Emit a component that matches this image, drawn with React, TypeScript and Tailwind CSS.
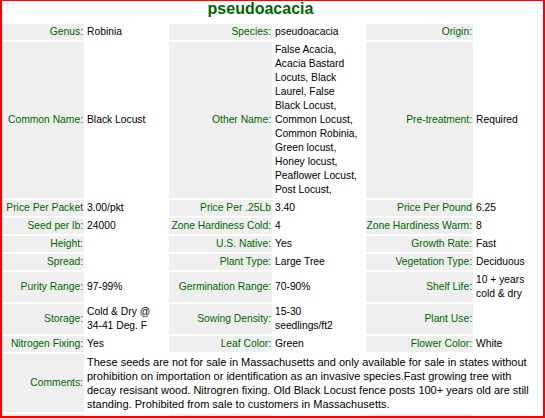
import type { ReactNode } from "react";

const lines = (...parts: string[]) => (
  <>
    {parts.map((p, i) => (
      <div key={i} className="whitespace-nowrap">
        {p}
      </div>
    ))}
  </>
);

const rows: [string, ReactNode, string, ReactNode, string, ReactNode][] = [
  ["Genus:", "Robinia", "Species:", "pseudoacacia", "Origin:", ""],
  [
    "Common Name:",
    "Black Locust",
    "Other Name:",
    lines(
      "False Acacia,",
      "Acacia Bastard",
      "Locuts, Black",
      "Laurel, False",
      "Black Locust,",
      "Common Locust,",
      "Common Robinia,",
      "Green locust,",
      "Honey locust,",
      "Peaflower Locust,",
      "Post Locust,"
    ),
    "Pre-treatment:",
    "Required",
  ],
  ["Price Per Packet", "3.00/pkt", "Price Per .25Lb", "3.40", "Price Per Pound", "6.25"],
  ["Seed per lb:", "24000", "Zone Hardiness Cold:", "4", "Zone Hardiness Warm:", "8"],
  ["Height:", "", "U.S. Native:", "Yes", "Growth Rate:", "Fast"],
  ["Spread:", "", "Plant Type:", "Large Tree", "Vegetation Type:", "Deciduous"],
  ["Purity Range:", "97-99%", "Germination Range:", "70-90%", "Shelf Life:", lines("10 + years", "cold & dry")],
  [
    "Storage:",
    lines("Cold & Dry @", "34-41 Deg. F"),
    "Sowing Density:",
    lines("15-30", "seedlings/ft2"),
    "Plant Use:",
    "",
  ],
  ["Nitrogen Fixing:", "Yes", "Leaf Color:", "Green", "Flower Color:", "White"],
];

const Label = ({ text }: { text: string }) => (
  <div className="bg-[#efefef] text-[#006600] p-px flex items-center justify-end text-right whitespace-nowrap">
    {text}
  </div>
);

const Value = ({ text }: { text: ReactNode }) => (
  <div className="p-px flex items-center text-black">
    <div>{text}</div>
  </div>
);

const App = () => {
  return (
    <div
      className="w-[545px] h-[418px] bg-white overflow-hidden border-t border-l-2 border-r-2 border-b-2 border-[#ff0000] text-[10.3px] leading-[14px]"
      style={{ fontFamily: '"Liberation Sans", Arial, sans-serif' }}
    >
      <div className="h-[21px] text-center pr-[24px] text-[16px] leading-[16px] font-bold text-[#006600]">
        pseudoacacia
      </div>
      <div className="mt-[2px] grid grid-cols-[82px_81px_103px_90px_107px_66px] gap-[2px]">
        {rows.map((r, i) => (
          <div className="contents" key={i}>
            <Label text={r[0]} />
            <Value text={r[1]} />
            <Label text={r[2]} />
            <Value text={r[3]} />
            <Label text={r[4]} />
            <Value text={r[5]} />
          </div>
        ))}
        <Label text="Comments:" />
        <div className="col-span-5 p-px flex items-center text-black text-[11px]">
          <div>
            {lines(
              "These seeds are not for sale in Massachusetts and only available for sale in states without",
              "prohibition on importation or identification as an invasive species.Fast growing tree with",
              "decay resisant wood. Nitrogren fixing. Old Black Locust fence posts 100+ years old are still",
              "standing. Prohibited from sale to customers in Massachusetts."
            )}
          </div>
        </div>
        <div className="h-[16px] bg-[#efefef]" />
        <div />
        <div className="h-[16px] bg-[#efefef]" />
        <div />
        <div className="h-[16px] bg-[#efefef]" />
        <div />
      </div>
    </div>
  );
};

export default App;
